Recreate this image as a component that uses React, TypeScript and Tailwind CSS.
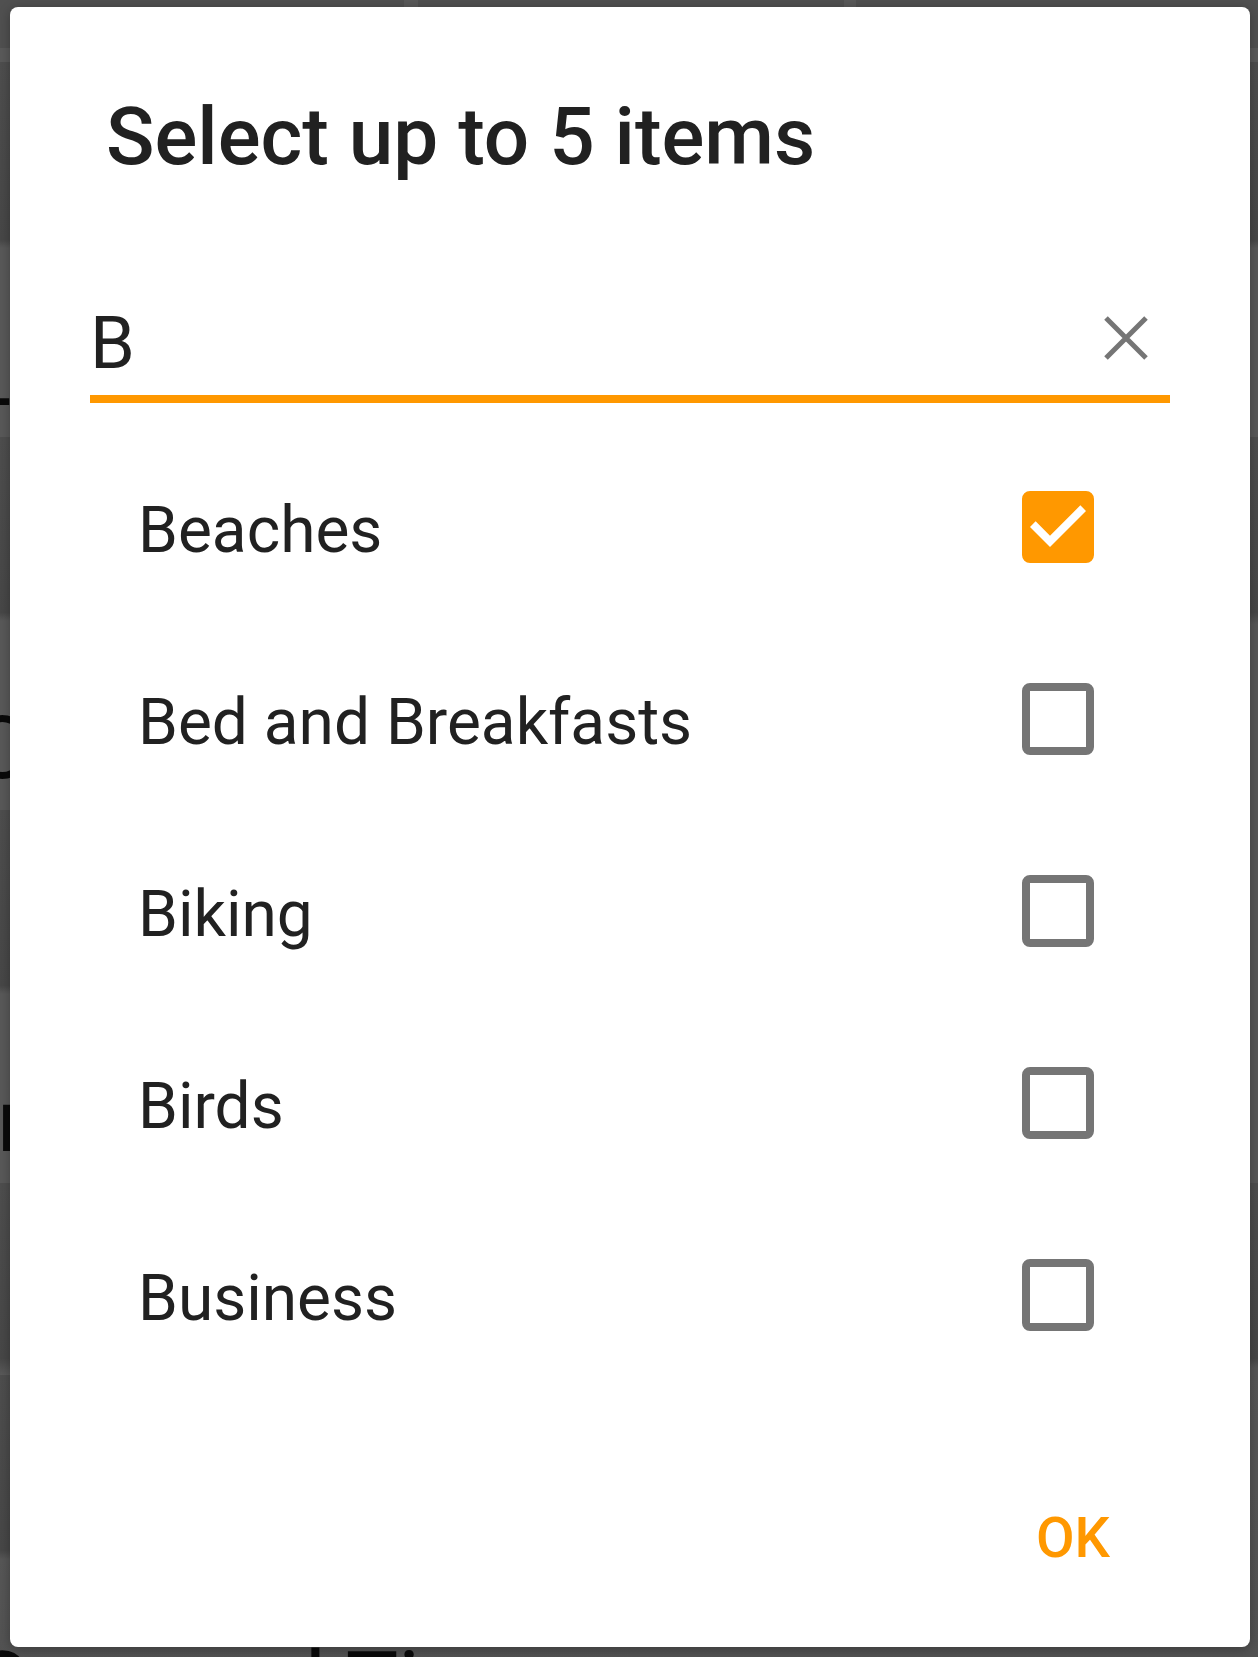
import { useState } from "react";

const ITEMS = ["Beaches", "Bed and Breakfasts", "Biking", "Birds", "Business"];

function Photo() {
  return <div className="h-44 shrink-0 bg-linear-to-b from-[#4e4e4e] to-[#474747]" />;
}

function Caption({ children }: { children?: React.ReactNode }) {
  return (
    <div className="h-[197px] shrink-0 overflow-hidden bg-linear-to-b from-[#484848] from-0% via-[#595959] via-4% to-[#595959] pt-[83px] text-[88px] leading-[104px] text-[#0a0a0a]">
      {children}
    </div>
  );
}

function TopEdge() {
  return (
    <>
      <div className="flex h-12 shrink-0 bg-[#505050]" />
      <div className="h-[14px] shrink-0 bg-[#5a5a5a]" />
      <div className="h-[178px] shrink-0 bg-linear-to-b from-[#4e4e4e] to-[#474747]" />
    </>
  );
}

function Backdrop() {
  return (
    <div
      aria-hidden="true"
      className="absolute inset-0 flex overflow-hidden bg-[#505050]"
    >
      <div className="flex min-w-0 flex-1 flex-col">
        <TopEdge />
        <Caption>
          <span className="-ml-9 block">L</span>
        </Caption>
        <Photo />
        <Caption>
          <span className="-ml-7 block">O</span>
        </Caption>
        <Photo />
        <Caption>
          <span className="-ml-[3px] block">n</span>
        </Caption>
        <Photo />
        <div className="h-4 shrink-0 bg-linear-to-b from-[#484848] to-[#5a5a5a]" />
        <Photo />
        <div className="flex min-h-0 flex-1 items-start overflow-hidden bg-linear-to-b from-[#484848] from-0% via-[#575757] via-8% to-[#525252] pt-20 text-[88px] leading-[104px] text-[#0a0a0a]">
          <span className="-ml-7 w-[304px] shrink-0">C</span>
          <span className="shrink-0">d Ti</span>
        </div>
      </div>
      <div className="flex min-w-0 flex-1 flex-col">
        <TopEdge />
        <Caption />
        <Photo />
        <div className="h-[570px] shrink-0 bg-linear-to-b from-[#484848] from-0% via-[#575757] via-2% to-[#575757]" />
        <Photo />
        <div className="flex-1 bg-linear-to-b from-[#484848] from-0% via-[#575757] via-3% to-[#525252]" />
      </div>
      <div className="absolute inset-x-0 top-0 flex h-12">
        <div className="w-[404px]" />
        <div className="w-[14px] bg-[#595959]" />
        <div className="w-[426px]" />
        <div className="w-[12px] bg-[#595959]" />
      </div>
    </div>
  );
}

function CheckItem({
  label,
  checked,
  onToggle,
}: {
  label: string;
  checked: boolean;
  onToggle: () => void;
}) {
  return (
    <li>
      <label className="flex h-48 cursor-pointer items-center justify-between pr-[76px] pl-12">
        <span className="pt-2 text-[64px] leading-[80px]">{label}</span>
        <span className="grid size-[72px] shrink-0">
          <input
            type="checkbox"
            checked={checked}
            onChange={onToggle}
            className="peer size-[72px] appearance-none rounded-lg border-8 border-[#757575] [grid-area:1/1] checked:border-[#ff9800] checked:bg-[#ff9800]"
          />
          <svg
            viewBox="0 0 72 72"
            aria-hidden="true"
            className="pointer-events-none hidden size-[72px] [grid-area:1/1] peer-checked:block"
          >
            <path
              d="M28 56 8 36l5.64-5.64L28 44.68l30.36-30.36L64 20z"
              fill="#fff"
            />
          </svg>
        </span>
      </label>
    </li>
  );
}

export default function App() {
  const [query, setQuery] = useState("B");
  const [selected, setSelected] = useState<string[]>(["Beaches"]);

  const toggle = (item: string) =>
    setSelected((current) =>
      current.includes(item)
        ? current.filter((name) => name !== item)
        : current.length < 5
          ? [...current, item]
          : current,
    );

  const visible = ITEMS.filter((item) =>
    item.toLowerCase().startsWith(query.toLowerCase()),
  );

  return (
    <div className="relative min-h-screen pt-[7px] pr-2 pb-[10px] pl-[10px] font-[Roboto,sans-serif] text-[#212121]">
      <Backdrop />
      <div
        role="dialog"
        aria-labelledby="dialog-title"
        className="relative rounded-lg bg-white px-20 pt-[82px] pb-[61px] shadow-[0_2px_12px_rgba(0,0,0,0.3)]"
      >
        <h1 id="dialog-title" className="pl-4 text-[80px] leading-[96px] font-medium">
          Select up to 5 items
        </h1>
        <div className="mt-[104px] flex items-center border-b-8 border-[#ff9800]">
          <input
            type="text"
            aria-label="Search items"
            value={query}
            onChange={(event) => setQuery(event.target.value)}
            className="h-[106px] min-w-0 flex-1 bg-transparent pt-1 text-[72px] outline-none"
          />
          <button
            type="button"
            aria-label="Clear search"
            onClick={() => setQuery("")}
            className="mr-2 mb-2 flex size-[72px] items-center justify-center"
          >
            <svg viewBox="0 0 48 48" className="size-12" aria-hidden="true">
              <path
                d="M4 4 44 44M44 4 4 44"
                fill="none"
                stroke="#757575"
                strokeWidth="5"
              />
            </svg>
          </button>
        </div>
        <ul className="mt-7">
          {visible.map((item) => (
            <CheckItem
              key={item}
              label={item}
              checked={selected.includes(item)}
              onToggle={() => toggle(item)}
            />
          ))}
        </ul>
        <div className="mt-[99px] flex justify-end pr-7">
          <button
            type="button"
            className="h-24 px-8 text-[56px] leading-[64px] font-medium text-[#ff9800]"
          >
            OK
          </button>
        </div>
      </div>
    </div>
  );
}
